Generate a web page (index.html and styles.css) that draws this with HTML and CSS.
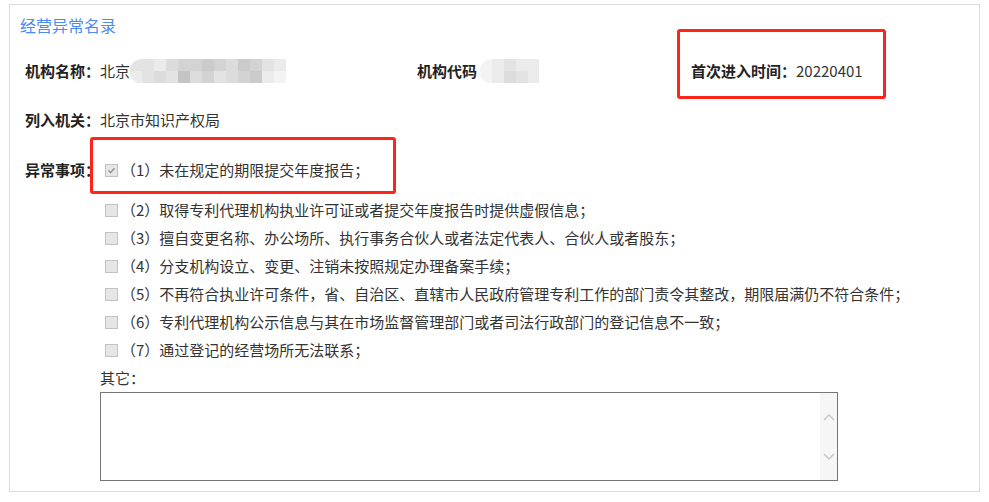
FILE: index.html
```html
<!DOCTYPE html>
<html lang="zh-CN">
<head>
    <meta charset="UTF-8">
    <meta name="viewport" content="width=device-width, initial-scale=1.0">
    <title>经营异常名录</title>
    <link rel="stylesheet" href="styles.css">
</head>
<body>
    <div class="panel">
        <h2 class="panel-title">经营异常名录</h2>

        <div class="info-row">
            <div class="info-cell cell-name">
                <span class="label">机构名称：</span><span class="value">北京</span>
                <span class="mosaic mosaic-long">
                    <i class="s2"></i><i class="s2"></i><i class="s1"></i><i class="s3"></i><i class="s4"></i><i class="s4"></i><i class="s5"></i><i class="s4"></i><i class="s3"></i><i class="s5"></i><i class="s4"></i><i class="s2"></i><i class="s1"></i>
                    <i class="s1"></i><i class="s2"></i><i class="s3"></i><i class="s2"></i><i class="s6"></i><i class="s3"></i><i class="s4"></i><i class="s2"></i><i class="s3"></i><i class="s4"></i><i class="s5"></i><i class="s1"></i><i class="s0"></i>
                </span>
            </div>
            <div class="info-cell cell-code">
                <span class="label">机构代码</span>
                <span class="mosaic mosaic-short">
                    <i class="s0"></i><i class="s1"></i><i class="s2"></i><i class="s1"></i><i class="s1"></i>
                    <i class="s0"></i><i class="s1"></i><i class="s3"></i><i class="s2"></i><i class="s1"></i>
                </span>
            </div>
            <div class="info-cell cell-date">
                <span class="label">首次进入时间：</span><span class="value">20220401</span>
            </div>
        </div>

        <div class="info-row">
            <div class="info-cell">
                <span class="label">列入机关：</span><span class="value">北京市知识产权局</span>
            </div>
        </div>

        <div class="info-row issues-row">
            <span class="label">异常事项：</span>
            <div class="issues">
                <ul class="issue-list">
                    <li class="issue"><span class="check checked"><svg viewBox="0 0 13 13" width="11" height="11"><path d="M3 6.6 L5.4 9 L10 3.8" fill="none" stroke="#8a8a8a" stroke-width="1.6"/></svg></span>（1）未在规定的期限提交年度报告；</li>
                    <li class="issue"><span class="check"></span>（2）取得专利代理机构执业许可证或者提交年度报告时提供虚假信息；</li>
                    <li class="issue"><span class="check"></span>（3）擅自变更名称、办公场所、执行事务合伙人或者法定代表人、合伙人或者股东；</li>
                    <li class="issue"><span class="check"></span>（4）分支机构设立、变更、注销未按照规定办理备案手续；</li>
                    <li class="issue"><span class="check"></span>（5）不再符合执业许可条件，省、自治区、直辖市人民政府管理专利工作的部门责令其整改，期限届满仍不符合条件；</li>
                    <li class="issue"><span class="check"></span>（6）专利代理机构公示信息与其在市场监督管理部门或者司法行政部门的登记信息不一致；</li>
                    <li class="issue"><span class="check"></span>（7）通过登记的经营场所无法联系；</li>
                </ul>
                <div class="other-label">其它：</div>
                <div class="other-box">
                    <textarea class="other-text"></textarea>
                    <div class="fake-scroll">
                        <svg viewBox="0 0 12 8" width="12" height="8"><path d="M1 7 L6 2 L11 7" fill="none" stroke="#c4c4c4" stroke-width="1.4"/></svg>
                        <svg viewBox="0 0 12 8" width="12" height="8"><path d="M1 1 L6 6 L11 1" fill="none" stroke="#c4c4c4" stroke-width="1.4"/></svg>
                    </div>
                </div>
            </div>
        </div>

        <div class="mark mark-date"></div>
        <div class="mark mark-issue"></div>
    </div>
</body>
</html>
```

FILE: styles.css
```css
body {
    margin: 0;
    background-color: #fff;
    font-family: "Noto Sans CJK SC", "Noto Sans", sans-serif;
    font-size: 15px;
    color: #333;
    text-spacing-trim: space-all;
}
.panel {
    position: relative;
    box-sizing: border-box;
    width: 971px;
    height: 488px;
    margin: 4px 9px;
    border: 1px solid #dcdde4;
    padding: 8px 10px 0 10px;
}
.panel-title {
    margin: 0;
    font-size: 16px;
    font-weight: normal;
    line-height: 24px;
    color: #4a8af5;
}
.info-row {
    display: flex;
    align-items: center;
    height: 28px;
    line-height: 28px;
    padding-left: 5px;
    margin-top: 21px;
    white-space: nowrap;
}
.info-row:nth-of-type(1) {
    margin-top: 20px;
}
.info-cell {
    display: flex;
    align-items: center;
}
.cell-name {
    width: 392px;
}
.cell-code {
    width: 274px;
}
.label {
    font-weight: bold;
    color: #222;
}
.value {
    color: #333;
}

/* blurred text */
.mosaic {
    display: grid;
    grid-auto-rows: 12px;
    height: 25px;
    overflow: hidden;
    border-radius: 12px 0 0 12px;
}
.mosaic-long {
    grid-template-columns: repeat(13, 12px);
    width: 157px;
}
.mosaic-short {
    grid-template-columns: repeat(5, 12px);
    width: 59px;
    margin-left: 3px;
}
.mosaic i { display: block; }
.s0 { background: #f3f3f3; }
.s1 { background: #ebebeb; }
.s2 { background: #e3e3e3; }
.s3 { background: #dcdcdc; }
.s4 { background: #d3d3d3; }
.s5 { background: #cbcbcb; }
.s6 { background: #c4c4c4; }

.issues-row {
    align-items: flex-start;
    height: auto;
    margin-top: 22px;
}
.issues {
    flex: 1;
}
.issue-list {
    list-style: none;
    margin: 0;
    padding: 0 0 0 1px;
}
.issue {
    display: flex;
    align-items: center;
    height: 28px;
}
.issue:nth-child(2) {
    margin-top: 12px;
}
.check {
    box-sizing: border-box;
    display: flex;
    align-items: center;
    justify-content: center;
    width: 13px;
    height: 13px;
    margin: 0 3px 0 4px;
    background: #e6e6e6;
    border: 1px solid #c2c2c2;
}
.other-label {
    line-height: 28px;
}
.other-box {
    display: flex;
    box-sizing: border-box;
    width: 738px;
    height: 89px;
    border: 1px solid #767676;
}
.other-text {
    flex: 1;
    border: none;
    outline: none;
    resize: none;
    padding: 2px;
    font-family: inherit;
}
.fake-scroll {
    display: flex;
    flex-direction: column;
    justify-content: space-between;
    align-items: center;
    width: 17px;
    padding: 20px 0 19px;
    box-sizing: border-box;
    background: #f6f6f6;
}

/* red annotation boxes */
.mark {
    position: absolute;
    border: 3px solid #ff2419;
    border-radius: 3px;
    box-sizing: border-box;
}
.mark-date {
    left: 667px;
    top: 24px;
    width: 209px;
    height: 70px;
}
.mark-issue {
    left: 80px;
    top: 132px;
    width: 306px;
    height: 57px;
}
```
